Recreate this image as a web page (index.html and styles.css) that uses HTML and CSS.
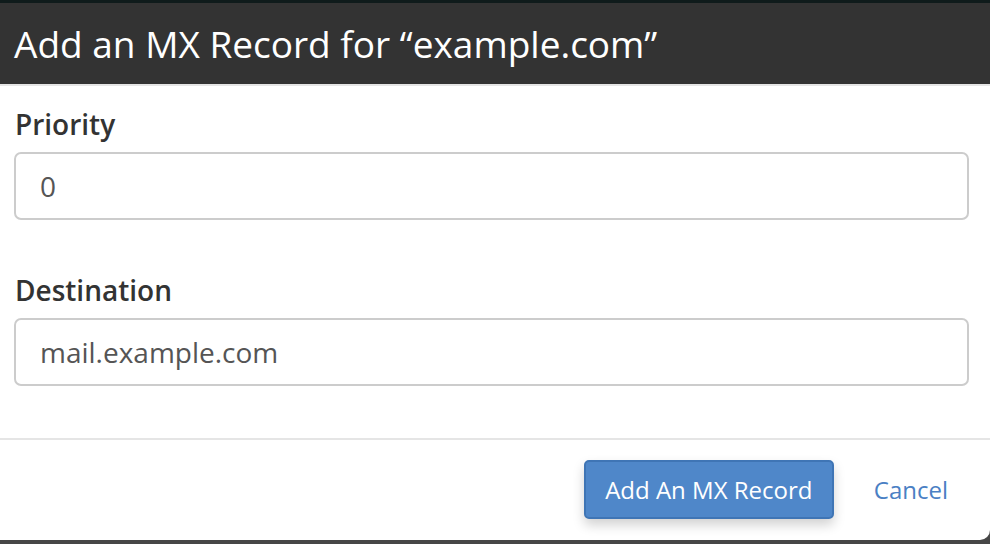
FILE: index.html
```html
<!DOCTYPE html>
<html lang="en">
<head>
    <meta charset="UTF-8">
    <meta name="viewport" content="width=device-width, initial-scale=1.0">
    <title>Add an MX Record</title>
    <link rel="stylesheet" href="styles.css">
</head>
<body>
    <div class="top-strip"></div>
    <div class="modal">
        <div class="modal-header">
            <h2>Add an MX Record for “example.com”</h2>
        </div>
        <div class="modal-body">
            <div class="form-group">
                <label for="priority">Priority</label>
                <input type="text" id="priority" value="0">
            </div>
            <div class="form-group">
                <label for="destination">Destination</label>
                <input type="text" id="destination" value="mail.example.com">
            </div>
        </div>
        <div class="modal-footer">
            <button class="btn-primary">Add An MX Record</button>
            <a href="#" class="cancel-link">Cancel</a>
        </div>
    </div>
</body>
</html>
```

FILE: styles.css
```css
body {
    font-family: "Open Sans", Arial, sans-serif;
    margin: 0;
    padding: 0;
    background-color: #464646;
    height: 544px;
    overflow: hidden;
}

.top-strip {
    height: 3px;
    background-color: #0f1b1b;
}

.modal {
    background-color: #fff;
    height: 537px;
    border-radius: 0 0 10px 0;
    display: flex;
    flex-direction: column;
}

.modal-header {
    background-color: #333;
    height: 81px;
    border-bottom: 2px solid #e5e5e5;
    display: flex;
    align-items: center;
    padding-left: 14px;
}

.modal-header h2 {
    margin: 0;
    color: #fff;
    font-weight: 400;
    font-size: 37px;
    line-height: 42px;
}

.modal-body {
    padding: 20px 21px 52px 14px;
    border-bottom: 2px solid #e5e5e5;
}

.form-group + .form-group {
    margin-top: 52px;
}

.form-group label {
    display: block;
    font-size: 28px;
    font-weight: 600;
    line-height: 36px;
    color: #333;
    margin-bottom: 10px;
    padding-left: 1px;
}

.form-group input {
    display: block;
    box-sizing: border-box;
    width: 100%;
    height: 68px;
    padding: 0 24px;
    border: 2px solid #ccc;
    border-radius: 7px;
    font-family: inherit;
    font-size: 28px;
    color: #555;
    background-color: #fff;
}

.modal-footer {
    display: flex;
    justify-content: flex-end;
    align-items: center;
    padding: 20px 42px 0 0;
}

.btn-primary {
    width: 250px;
    height: 59px;
    background-color: #4f87c9;
    border: 2px solid #3f75b5;
    border-radius: 5px;
    color: #fff;
    font-family: inherit;
    font-size: 24px;
    box-shadow: 0 6px 12px rgba(0, 0, 0, 0.18);
    cursor: pointer;
}

.cancel-link {
    margin-left: 40px;
    font-size: 24px;
    color: #4a80c4;
    text-decoration: none;
}
```
